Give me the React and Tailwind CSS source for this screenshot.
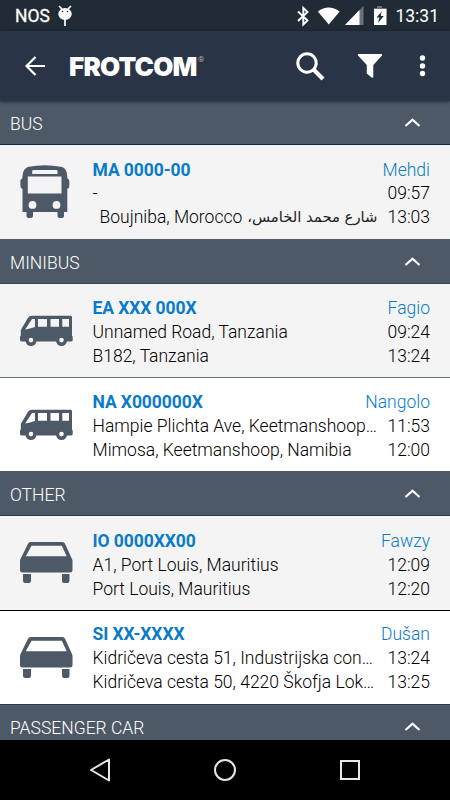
import React from "react";

const SLATE = "#4d5966";

function BusIcon() {
  return (
    <svg width="50" height="54" viewBox="0 0 50 54" fill={SLATE}>
      <path
        fillRule="evenodd"
        d="M9 1.8Q24.500-1.200 41 1.800Q46 3 46.800 8L47.500 13.500Q49.300 14 49.300 16V21Q49.300 23.500 47.300 23.800V47H44V51Q44 53 42 53H39.500Q37.500 53 37.500 51V47H13V51Q13 53 11 53H8.500Q6.500 53 6.500 51V47H2.500V23.800Q.4 23.500.4 21V16Q.4 14 2.200 13.500L3 8Q4 3 9 1.800ZM13.500 5Q12.200 5 12.200 6V9H37.500V6Q37.500 5 36.500 5ZM7.800 11.500V28.500H41.500V11.500ZM12.500 36A3.900 3.900 0 1 0 12.500 43.800A3.900 3.900 0 1 0 12.500 36ZM36.500 36A3.900 3.900 0 1 0 36.500 43.800A3.900 3.900 0 1 0 36.500 36Z"
      />
    </svg>
  );
}

function MinibusIcon() {
  return (
    <svg width="54" height="32" viewBox="0 0 54 32" fill={SLATE}>
      <path
        fillRule="evenodd"
        d="M12 .8H50.500Q52 .8 52 2.300V20.500Q52.700 21 52.700 22V25Q52.700 26.500 51 26.500H47Q45.500 31 41.500 31Q37.500 31 36 26.500H16.500Q15 31 11 31Q7 31 5.500 26.500H2Q0 26.500 0 25V22Q0 21 .8 20.500V15L8 2.800Q9.300.8 12 .8ZM12 4L5.200 14.500Q10 13.800 15 12V4ZM18 4V11.700H27V4ZM30.500 4V11.700H39V4ZM42.300 4V11.700H49V4ZM11 22.800A2.300 2.300 0 1 0 11 27.400A2.300 2.300 0 1 0 11 22.800ZM41.500 22.800A2.300 2.300 0 1 0 41.500 27.400A2.300 2.300 0 1 0 41.500 22.800Z"
      />
    </svg>
  );
}

function CarIcon() {
  return (
    <svg width="54" height="42" viewBox="0 0 54 42" fill={SLATE}>
      <path
        fillRule="evenodd"
        d="M10.500 0H42.500Q44.200 0 45 1.800L51.500 16Q52.500 17.500 52.500 19V28Q52.500 30.500 50 30.500H2.500Q0 30.500 0 28V19Q0 17.500 1 16L8 1.800Q8.800 0 10.500 0ZM11.500 3.700L5.800 14.300H46.700L41.800 3.700Z"
      />
      <path d="M3 32H11V38.500Q11 41 9 41H5Q3 41 3 38.500ZM42 32H49.500V38.500Q49.500 41 47.500 41H44Q42 41 42 38.500Z" />
    </svg>
  );
}

function StatusBar() {
  return (
    <div className="flex h-[31px] items-center bg-[#202b36] pr-[11px] pl-[15px] text-white">
      <span className="mt-[3px] w-[42px] text-[17.5px] leading-none font-normal [-webkit-text-stroke:0.3px_white]">
        NOS
      </span>
      <svg className="mt-px" width="16" height="22" viewBox="0 0 16 22" fill="#fff">
        <path d="M2 1L5 4M14 1L11 4M8 13V21" stroke="#fff" strokeWidth="1.700" />
        <ellipse cx="8" cy="9" rx="6.700" ry="6" />
        <circle cx="5.500" cy="6.500" r=".8" fill="#202b36" />
        <circle cx="10.500" cy="6.500" r=".8" fill="#202b36" />
      </svg>
      <svg className="ml-auto" width="95" height="24" viewBox="0 0 95 24" fill="#fff">
        <path d="M3 7.500L12.500 16.500L8.300 20.500V4L12.500 8L3 17" fill="none" stroke="#fff" strokeWidth="1.900" />
        <path d="M22.800 7.500Q33.500-.5 44.700 7.500L33.800 20.500Z" />
        <path d="M68.500 2V21H50Z" fill="#687079" />
        <path d="M64.500 6V21H50Z" />
        <path d="M82 2H87V4H91.500V10H79V4H82Z" fill="#687079" />
        <path fillRule="evenodd" d="M79 5H91.500V21H79ZM87 7L81.500 13.500H84.500L83 19L88.800 12H85.800Z" />
      </svg>
      <span className="mt-[3px] ml-[5px] text-[17.5px] leading-none">13:31</span>
    </div>
  );
}

function AppBar() {
  return (
    <header className="relative z-10 flex h-[70px] items-center bg-[#293546] pl-[25px] text-white shadow-[0_1px_3px_rgba(0,0,0,0.5)]">
      <svg width="20" height="20" viewBox="0 0 20 20" fill="none" stroke="#fff" strokeWidth="2.200">
        <path d="M20 10H2M10.500 1L1.500 10L10.500 19" />
      </svg>
      <span className="mt-px ml-[24px] w-[129px] font-['Inter'] text-[26px] leading-none font-black tracking-[-0.8px] whitespace-nowrap">
        FROTCOM
      </span>
      <span className="-mt-[13px] text-[8px] leading-none text-[#aab1b8]">®</span>
      <svg className="ml-auto" width="29" height="29" viewBox="0 0 29 29" fill="none" stroke="#fff">
        <circle cx="11" cy="11" r="9.200" strokeWidth="3" />
        <path d="M17.500 17.500L27 27" strokeWidth="4" />
      </svg>
      <svg className="ml-[33px]" width="24" height="24" viewBox="0 0 24 24" fill="#fff">
        <path d="M0 0H24V1.500L15.300 11V23.500H13.500L8.800 19.500V11L0 1.500Z" />
      </svg>
      <svg className="mr-[24px] ml-[37px]" width="7" height="22" viewBox="0 0 7 22" fill="#fff">
        <circle cx="3.500" cy="3" r="2.700" />
        <circle cx="3.500" cy="11" r="2.700" />
        <circle cx="3.500" cy="18.500" r="2.700" />
      </svg>
    </header>
  );
}

function GroupHeader({ title, className }) {
  return (
    <div className={"flex shrink-0 items-center justify-between bg-[#4d5966] pr-[29px] pl-[10px] " + className}>
      <h2 className="pt-[2px] text-[17.5px] leading-6 font-light text-white">{title}</h2>
      <svg width="17" height="10" viewBox="0 0 17 10" fill="none" stroke="#fff" strokeWidth="2.200">
        <path d="M1.500 8L8.500 1.800L15.500 8" />
      </svg>
    </div>
  );
}

function Row({ icon, plate, driver, from, fromTime, to, toTime, className }) {
  return (
    <div className={"flex shrink-0 pr-[20px] text-[17.5px] font-light text-black " + className}>
      <div className="flex w-[92.500px] shrink-0 items-center pl-[20px]">{icon}</div>
      <div className="min-w-0 flex-1">
        <div className="flex justify-between text-[#0a7bc8]">
          <strong className="font-bold tracking-[-0.08px]">{plate}</strong>
          <span>{driver}</span>
        </div>
        <div className="flex justify-between">
          <span className="whitespace-pre">{from}</span>
          <span>{fromTime}</span>
        </div>
        <div className="flex justify-between">
          <span className="whitespace-pre">{to}</span>
          <span>{toTime}</span>
        </div>
      </div>
    </div>
  );
}

export default function App() {
  return (
    <div className="flex h-[800px] w-[450px] flex-col overflow-hidden bg-white font-['Roboto','DejaVu_Sans',sans-serif]">
      <StatusBar />
      <AppBar />
      <main className="flex h-[639px] flex-col overflow-hidden">
        <GroupHeader title="BUS" className="h-[44px] border-b border-[#132a45]" />
        <Row
          className="h-[94px] bg-[#f4f4f4] leading-[23.7px] *:last:pt-[13.6px]"
          icon={<BusIcon />}
          plate="MA 0000-00"
          driver="Mehdi"
          from="-"
          fromTime="09:57"
          to={
            <span className="flex w-[285px] justify-between pl-[7px]">
              <span>Boujniba, Morocco</span>
              <span dir="rtl" className="-mt-px font-['DejaVu_Sans'] text-[14.8px] font-normal text-[#222]">
                شارع محمد الخامس،
              </span>
            </span>
          }
          toTime="13:03"
        />
        <GroupHeader title="MINIBUS" className="h-[45px] border-b border-[#3b4957] pt-px" />
        <Row
          className="h-[94px] border-b border-[#69717a] bg-[#f4f4f4] leading-[24px] *:last:pt-[12px]"
          icon={<MinibusIcon />}
          plate="EA XXX 000X"
          driver="Fagio"
          from="Unnamed Road, Tanzania"
          fromTime="09:24"
          to="B182, Tanzania"
          toTime="13:24"
        />
        <Row
          className="h-[93px] bg-white leading-[24px] *:last:pt-[12px]"
          icon={<MinibusIcon />}
          plate="NA X000000X"
          driver="Nangolo"
          from="Hampie Plichta Ave, Keetmanshoop…"
          fromTime="11:53"
          to="Mimosa, Keetmanshoop, Namibia"
          toTime="12:00"
        />
        <GroupHeader title="OTHER" className="h-[45px] border-b border-[#263c50] pt-[2px]" />
        <Row
          className="h-[95px] border-b border-black bg-[#f4f4f4] leading-[24px] *:last:pt-[13px]"
          icon={<CarIcon />}
          plate="IO 0000XX00"
          driver="Fawzy"
          from="A1, Port Louis, Mauritius"
          fromTime="12:09"
          to="Port Louis, Mauritius"
          toTime="12:20"
        />
        <Row
          className="h-[93px] bg-white leading-[24px] *:last:pt-[11px]"
          icon={<CarIcon />}
          plate="SI XX-XXXX"
          driver="Dušan"
          from="Kidričeva cesta 51, Industrijska con…"
          fromTime="13:24"
          to="Kidričeva cesta 50, 4220 Škofja Lok…"
          toTime="13:25"
        />
        <GroupHeader title="PASSENGER CAR" className="h-[44px] border-t border-[#263c50]" />
      </main>
      <nav className="flex h-[60px] shrink-0 items-center bg-black px-[89px]">
        <svg width="272" height="24" viewBox="0 0 272 24" fill="none" stroke="#e6e6e6" strokeWidth="2">
          <path d="M20 1.500V22.500L2 12Z" strokeLinejoin="round" />
          <circle cx="136" cy="12" r="10" />
          <rect x="252" y="3" width="18" height="18" />
        </svg>
      </nav>
    </div>
  );
}
